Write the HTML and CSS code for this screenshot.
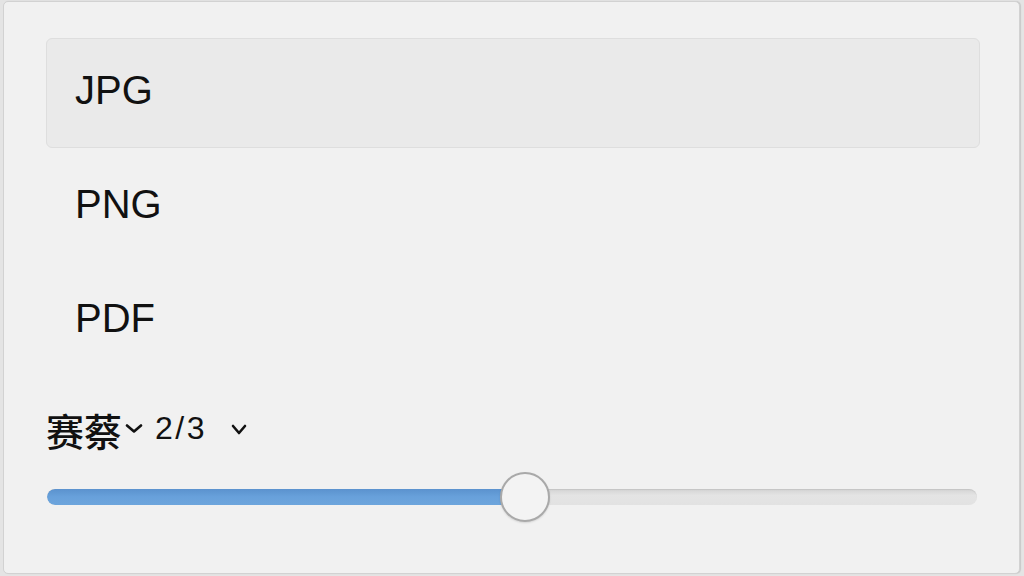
FILE: index.html
```html
<!DOCTYPE html>
<html lang="zh">
<head>
<meta charset="utf-8">
<title>Export format</title>
<link rel="stylesheet" href="styles.css">
</head>
<body>
<div class="panel">
  <ul class="formats">
    <li class="format selected">JPG</li>
    <li class="format">PNG</li>
    <li class="format">PDF</li>
  </ul>
  <div class="pager">
    <span class="cjk">赛蔡</span>
    <svg class="chev-small" width="18" height="9" viewBox="0 0 18 9"><path d="M2 1.5 L9 7.5 L16 1.5" fill="none" stroke="#111" stroke-width="2.6" stroke-linecap="round" stroke-linejoin="round"/></svg>
    <span class="count">2/3</span>
    <svg class="chev" width="16" height="11" viewBox="0 0 16 11"><path d="M2 2 L8 9 L14 2" fill="none" stroke="#111" stroke-width="2.6" stroke-linecap="round" stroke-linejoin="round"/></svg>
  </div>
  <div class="slider">
    <div class="track">
      <div class="fill" style="width: 51.4%"></div>
    </div>
    <div class="thumb" style="left: 51.4%"></div>
  </div>
</div>
</body>
</html>
```
FILE: styles.css
```css
html, body {
  margin: 0;
  padding: 0;
}
body {
  background: #e4e4e4;
  width: 1024px;
  height: 576px;
  overflow: hidden;
  font-family: "Liberation Sans", Arial, sans-serif;
  color: #111;
}
.panel {
  box-sizing: border-box;
  margin: 1px 0 0 3px;
  width: 1017px;
  height: 573px;
  background: #f1f1f1;
  border: 1px solid #d2d2d2;
  border-radius: 5px;
  box-shadow: 1px 0 1px rgba(0,0,0,0.12);
  padding: 36px 39px 0 42px;
}
.formats {
  list-style: none;
  margin: 0;
  padding: 0;
  display: flex;
  flex-direction: column;
  gap: 4px;
}
.format {
  box-sizing: border-box;
  height: 110px;
  display: flex;
  align-items: center;
  padding: 0 0 6px 28px;
  font-size: 40px;
  border: 1px solid transparent;
  border-radius: 6px;
}
.format.selected {
  background: #eaeaea;
  border-color: #dedede;
}
.pager {
  margin-top: 33px;
  height: 40px;
  display: flex;
  align-items: center;
}
.cjk {
  font-family: "Noto Sans CJK SC", "Liberation Sans", sans-serif;
  font-size: 38px;
  font-weight: 500;
  line-height: 40px;
  margin-top: 1px;
}
.chev-small {
  margin-left: 3px;
  margin-top: -2px;
}
.count {
  font-size: 32px;
  letter-spacing: 2.5px;
  margin-left: 12px;
  margin-top: -2px;
}
.chev {
  margin-left: 24px;
  margin-top: 0;
}
.slider {
  position: relative;
  margin-top: 23px;
  margin-left: 1px;
  width: 930px;
  height: 50px;
  display: flex;
  align-items: center;
}
.track {
  width: 100%;
  height: 16px;
  border-radius: 8px;
  background: linear-gradient(#d4d4d4, #e4e4e4 40%, #e2e2e2);
  box-shadow: inset 0 1px 1px rgba(0,0,0,0.08);
  overflow: hidden;
}
.fill {
  height: 100%;
  background: linear-gradient(#5b92ce, #68a1db 50%, #6da5dc);
  border-radius: 8px 0 0 8px;
}
.thumb {
  position: absolute;
  top: 0;
  width: 50px;
  height: 50px;
  box-sizing: border-box;
  transform: translateX(-50%);
  border-radius: 50%;
  background: #f3f3f3;
  border: 2px solid #a9a9a9;
  box-shadow: 0 1px 2px rgba(0,0,0,0.12);
}
```
